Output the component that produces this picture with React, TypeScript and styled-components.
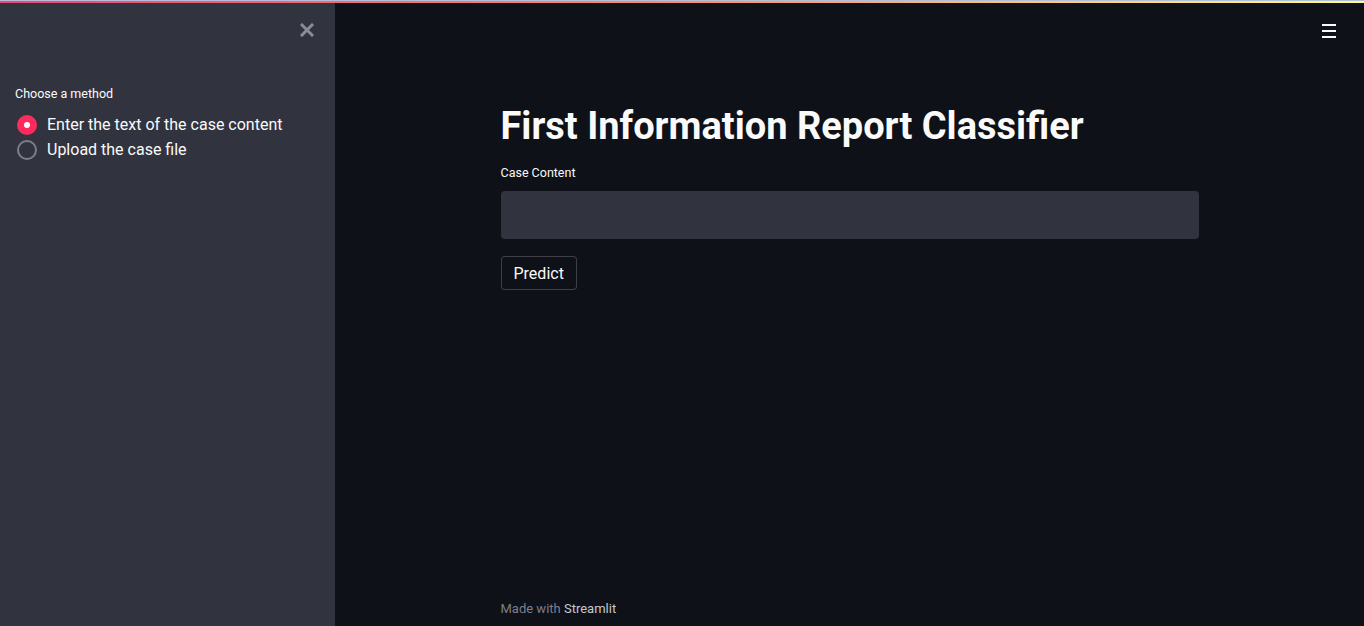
import React, { useState } from "react";
import styled, { createGlobalStyle } from "styled-components";

const GlobalStyle = createGlobalStyle`
  html, body { margin: 0; padding: 0; background: #0e1117; }
  body { font-family: Roboto, "Noto Sans", sans-serif; color: #fafafa; }
  * { box-sizing: border-box; }
`;

const Page = styled.div`
  position: relative;
  width: 1364px;
  height: 626px;
  display: flex;
  overflow: hidden;
  background: #0e1117;
`;

const Decoration = styled.div`
  position: absolute;
  top: 0;
  left: 0;
  right: 0;
  height: 3px;
  border-top: 1px solid #b3c0dc;
  background: linear-gradient(90deg, #f0467a, #ff8a6a 50%, #fffd80);
  z-index: 2;
`;

const Sidebar = styled.aside`
  width: 335px;
  flex: none;
  height: 100%;
  background: #31333f;
  display: flex;
  flex-direction: column;
  padding: 20px 15px 0 15px;
`;

const CloseRow = styled.div`
  display: flex;
  justify-content: flex-end;
  padding-right: 5px;
  height: 20px;
  align-items: center;
`;

const CloseBtn = styled.button`
  background: none;
  border: none;
  padding: 0;
  width: 16px;
  height: 16px;
  display: flex;
  align-items: center;
  justify-content: center;
  cursor: pointer;
`;

const RadioLabel = styled.div`
  margin-top: 48px;
  font-size: 12.5px;
  color: #fafafa;
  line-height: 1;
`;

const RadioList = styled.div`
  display: flex;
  flex-direction: column;
  margin-top: 14px;
  gap: 5px;
`;

const RadioItem = styled.label`
  display: flex;
  align-items: center;
  gap: 10px;
  padding-left: 2px;
  font-size: 16px;
  color: #fafafa;
  height: 20px;
  cursor: pointer;
`;

const RadioCircle = styled.span<{ $checked: boolean }>`
  width: 20px;
  height: 20px;
  border-radius: 50%;
  flex: none;
  display: flex;
  align-items: center;
  justify-content: center;
  background: ${(p) => (p.$checked ? "#ff2b5e" : "transparent")};
  border: ${(p) => (p.$checked ? "none" : "2px solid #7d7f88")};
  &::after {
    content: "";
    width: 6px;
    height: 6px;
    border-radius: 50%;
    background: #fafafa;
    display: ${(p) => (p.$checked ? "block" : "none")};
  }
`;

const Main = styled.main`
  flex: 1;
  position: relative;
  display: flex;
  flex-direction: column;
  align-items: center;
  height: 100%;
`;

const MenuBtn = styled.button`
  position: absolute;
  top: 23px;
  right: 27px;
  width: 16px;
  height: 16px;
  background: none;
  border: none;
  display: flex;
  flex-direction: column;
  justify-content: space-between;
  padding: 1px 1px;
  cursor: pointer;
  span {
    display: block;
    height: 2px;
    background: #fafafa;
  }
`;

const Content = styled.div`
  width: 698px;
  padding-top: 103px;
  display: flex;
  flex-direction: column;
  flex: 1;
`;

const Title = styled.h1`
  margin: 0;
  font-family: Roboto, "Noto Sans", sans-serif;
  font-weight: 700;
  font-size: 38px;
  line-height: 46px;
  color: #fafafa;
  letter-spacing: 0;
`;

const FieldLabel = styled.div`
  margin-top: 16px;
  font-size: 12.5px;
  line-height: 16px;
  color: #fafafa;
`;

const TextInput = styled.input`
  margin-top: 10px;
  height: 48px;
  width: 100%;
  border: none;
  border-radius: 4px;
  background: #31333f;
  color: #fafafa;
  font-size: 16px;
  padding: 0 12px;
  outline: none;
`;

const PredictBtn = styled.button`
  margin-top: 17px;
  align-self: flex-start;
  height: 34px;
  padding: 0 12px;
  background: #0e1117;
  color: #fafafa;
  border: 1px solid rgba(250, 250, 250, 0.2);
  border-radius: 4px;
  font-family: Roboto, "Noto Sans", sans-serif;
  font-size: 16px;
  cursor: pointer;
`;

const Footer = styled.footer`
  margin-top: auto;
  padding-bottom: 10px;
  font-size: 13px;
  color: #7d7f88;
  span {
    color: #c6c8d0;
  }
`;

export default function App() {
  const [choice, setChoice] = useState(0);
  const options = ["Enter the text of the case content", "Upload the case file"];
  return (
    <>
      <GlobalStyle />
      <Page>
        <Decoration />
        <Sidebar>
          <CloseRow>
            <CloseBtn aria-label="Close sidebar">
              <svg width="14" height="14" viewBox="0 0 14 14">
                <path d="M2 2 L12 12 M12 2 L2 12" stroke="#8a8c96" strokeWidth="3" strokeLinecap="square" />
              </svg>
            </CloseBtn>
          </CloseRow>
          <RadioLabel>Choose a method</RadioLabel>
          <RadioList>
            {options.map((o, i) => (
              <RadioItem key={o} onClick={() => setChoice(i)}>
                <RadioCircle $checked={choice === i} />
                {o}
              </RadioItem>
            ))}
          </RadioList>
        </Sidebar>
        <Main>
          <MenuBtn aria-label="Menu">
            <span />
            <span />
            <span />
          </MenuBtn>
          <Content>
            <Title>First Information Report Classifier</Title>
            <FieldLabel>Case Content</FieldLabel>
            <TextInput />
            <PredictBtn>Predict</PredictBtn>
            <Footer>
              Made with <span>Streamlit</span>
            </Footer>
          </Content>
        </Main>
      </Page>
    </>
  );
}
